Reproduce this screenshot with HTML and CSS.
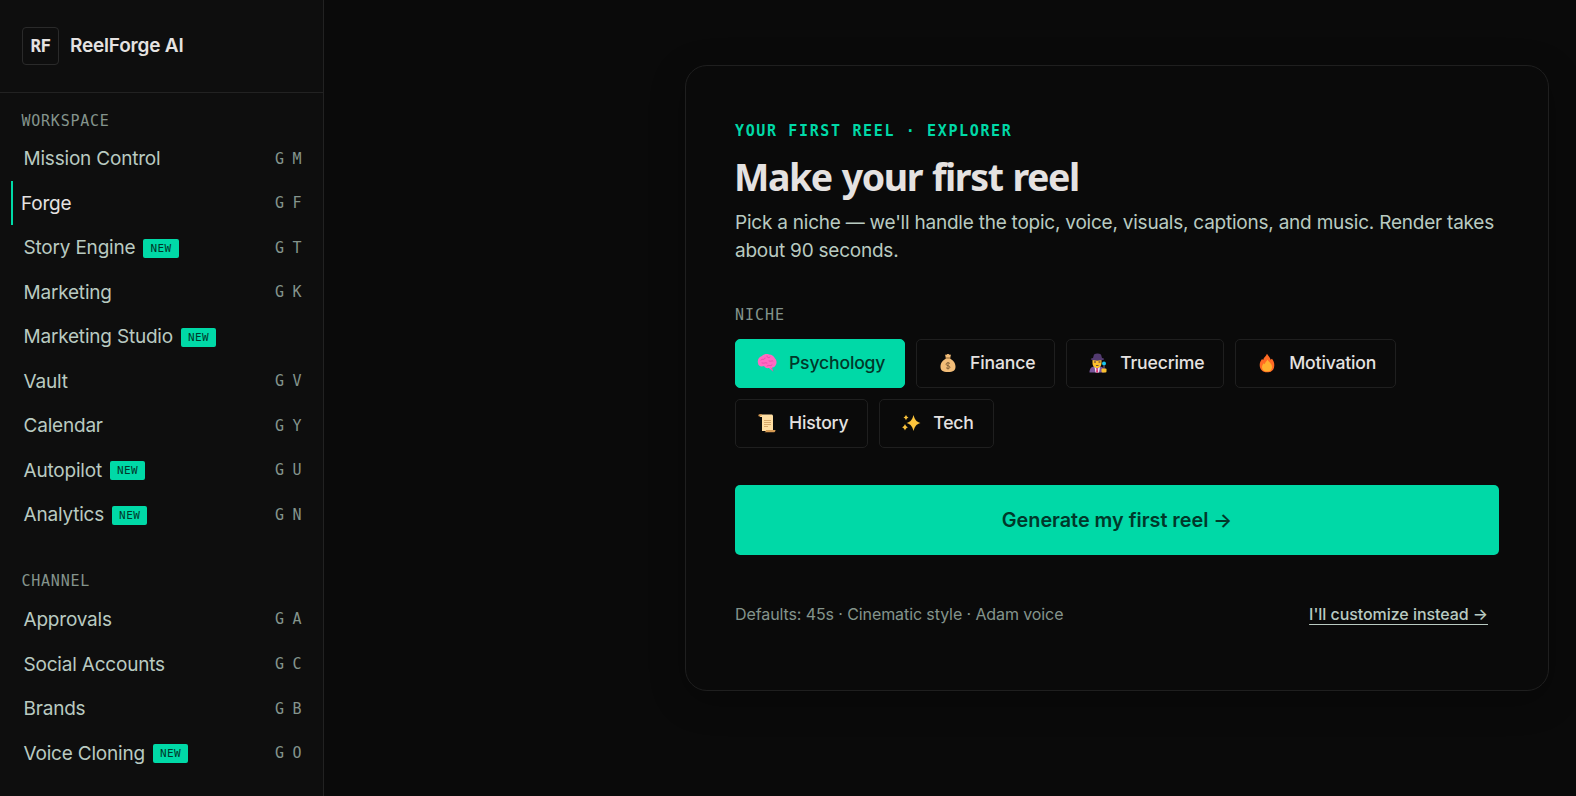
FILE: index.html
```html
<!DOCTYPE html>
<html lang="en">
<head>
    <meta charset="UTF-8">
    <meta name="viewport" content="width=device-width, initial-scale=1.0">
    <title>ReelForge AI</title>
    <link rel="stylesheet" href="styles.css">
</head>
<body>
    <div class="app">
        <aside class="sidebar">
            <div class="brand">
                <div class="brand-mark">RF</div>
                <div class="brand-name">ReelForge AI</div>
            </div>

            <nav class="nav">
                <div class="nav-title">WORKSPACE</div>
                <a class="nav-item"><span>Mission Control</span><kbd>G M</kbd></a>
                <a class="nav-item active"><span>Forge</span><kbd>G F</kbd></a>
                <a class="nav-item"><span>Story Engine</span><b class="badge">NEW</b><kbd>G T</kbd></a>
                <a class="nav-item"><span>Marketing</span><kbd>G K</kbd></a>
                <a class="nav-item"><span>Marketing Studio</span><b class="badge">NEW</b></a>
                <a class="nav-item"><span>Vault</span><kbd>G V</kbd></a>
                <a class="nav-item"><span>Calendar</span><kbd>G Y</kbd></a>
                <a class="nav-item"><span>Autopilot</span><b class="badge">NEW</b><kbd>G U</kbd></a>
                <a class="nav-item"><span>Analytics</span><b class="badge">NEW</b><kbd>G N</kbd></a>
            </nav>

            <nav class="nav">
                <div class="nav-title">CHANNEL</div>
                <a class="nav-item"><span>Approvals</span><kbd>G A</kbd></a>
                <a class="nav-item"><span>Social Accounts</span><kbd>G C</kbd></a>
                <a class="nav-item"><span>Brands</span><kbd>G B</kbd></a>
                <a class="nav-item"><span>Voice Cloning</span><b class="badge">NEW</b><kbd>G O</kbd></a>
            </nav>
        </aside>

        <main class="main">
            <section class="card">
                <div class="eyebrow">YOUR FIRST REEL · EXPLORER</div>
                <h1>Make your first reel</h1>
                <p class="intro">Pick a niche — we'll handle the topic, voice, visuals, captions, and music. Render takes about 90 seconds.</p>

                <div class="label">NICHE</div>
                <div class="chips">
                    <button class="chip selected">
                        <svg class="icon" viewBox="0 0 20 20">
                            <path fill="#ff6ac2" d="M1 10C0 7 2 4 5 3c2-2 5-2.500 7-1.500 3 0 5 2 6 4 2 2 2 5 .5 7-1 1.500-2 2-3.500 2l1 4-4-3.500c-3 .5-4-.5-5-2-3 1-6 0-6-3z"/>
                            <path fill="none" stroke="#e13da4" stroke-width=".7" stroke-linecap="round" d="M4 7c2-2 3 1 4-2M10 3c0 2 2 2 3 1M12 8c2 1 3-1 4 0M5 10c2 1 3-1 5 0M10 13c2-2 3 1 5-1M14 15l2 3"/>
                        </svg>
                        <span>Psychology</span>
                    </button>
                    <button class="chip">
                        <svg class="icon" viewBox="0 0 20 20">
                            <path fill="#f3bd78" d="M7 1.500c1 .8 2-.5 3-.5s2 1.300 3 .5l-1 4c3 1.500 5.500 4.500 5.500 8 0 4-2 5.500-7.500 5.500S2.500 17.500 2.500 13.500c0-3.500 2.500-6.500 5.500-8z"/>
                            <path stroke="#8f6534" stroke-width="1" d="M7.500 5h5"/>
                            <path fill="none" stroke="#73532e" stroke-width=".8" d="M12 10.500c-1-1-4-1-4 .7 0 2 4 1 4 3 0 1.600-3 1.600-4 .5M10 9v7.500"/>
                        </svg>
                        <span>Finance</span>
                    </button>
                    <button class="chip">
                        <svg class="icon" viewBox="0 0 20 20">
                            <path fill="#78559b" d="M1.500 19.500c0-4 2-6 5-6h5c3 0 5 2 5 6z"/>
                            <path fill="#fbc02d" d="M4.500 6h9v4c0 3-2 5-4.500 5s-4.500-2-4.500-5z"/>
                            <path fill="#533b70" d="M5 5l1-3.500c2-1.500 5-1.500 7 0L14 5c2 .3 2.500 1 2 1.500-3 1.500-10.500 1.500-13 0C2.500 6 3 5.300 5 5z"/>
                            <path fill="#eee7f7" d="M6.500 14L9 16l3-2-1 5.500H7.500z"/>
                            <path fill="#df3772" d="M8.500 15h1.200l.5 4.500H8z"/>
                            <path fill="#44304f" d="M6 8.500h2v1H6zM10.500 8.500h2v1h-2zM8 12h2.500v.8H8z"/>
                            <circle cx="16" cy="10.500" r="2" fill="#18c8ef"/>
                            <path stroke="#8c6f9a" d="M16 12.500v4"/>
                            <rect x="13.500" y="15.500" width="5" height="4" rx="1" fill="#fbc02d"/>
                        </svg>
                        <span>Truecrime</span>
                    </button>
                    <button class="chip">
                        <svg class="icon" viewBox="0 0 20 20">
                            <path fill="#ff6a24" d="M10 .8c1 2 3.500 4 3.500 6l1.500-1c1.500 2 2.300 3.500 2.300 6.500 0 5-3 7-7.300 7S2.700 16.500 2.700 12c0-3 1.300-4.500 2.300-6l1.200 1C6.500 4.500 9 3.500 10 .8z"/>
                            <path fill="#ffb02e" d="M10.500 6.500c.5 2 4.500 3.500 4.500 7.500 0 3-2 4.500-5 4.500S5 17 5 14.200c0-2 1-3 1.800-4l1 1c.3-2 2-3 2.700-4.700z"/>
                        </svg>
                        <span>Motivation</span>
                    </button>
                    <button class="chip">
                        <svg class="icon" viewBox="0 0 20 20">
                            <path fill="#ffdea2" d="M3 1.500h11.500c.8 0 1.500.7 1.500 1.500v15H5V4H3z"/>
                            <path fill="#d79b53" d="M2.800 1.200H5v1.300H3.500V3.500H2C.8 2.500 1.500 1.200 2.800 1.200zM9 17h9.500c0 1.700-.8 2.300-2 2.300H6.500c1.500 0 2.500-.8 2.500-2.300z"/>
                            <path stroke="#cc9b5d" stroke-width=".8" d="M7 7.500h7M7 9.500h7M7 11.500h7M7 13.500h4"/>
                        </svg>
                        <span>History</span>
                    </button>
                    <button class="chip">
                        <svg class="icon" viewBox="0 0 20 20">
                            <path fill="#fcc43c" d="M12.500 2c1.500 5 2.500 6.500 7 8-4.500 1.500-5.500 3-7 8-1.500-5-2.500-6.500-7-8 4.500-1.500 5.500-3 7-8zM5 1.800c.6 1.800 1 2.200 2.500 2.800C6 5.200 5.600 5.600 5 7.400c-.6-1.800-1-2.200-2.500-2.800C4 4 4.400 3.600 5 1.800zM4 11c.8 2 1.200 2.400 3 3.200-1.800.8-2.200 1.200-3 3.200-.8-2-1.200-2.400-3-3.200 1.800-.8 2.200-1.200 3-3.200z"/>
                        </svg>
                        <span>Tech</span>
                    </button>
                </div>

                <button class="generate">Generate my first reel →</button>

                <div class="card-footer">
                    <span>Defaults: 45s · Cinematic style · Adam voice</span>
                    <a class="customize">I'll customize instead →</a>
                </div>
            </section>
        </main>
    </div>
</body>
</html>
```
FILE: styles.css
```css
* {
    box-sizing: border-box;
}
body {
    margin: 0;
    background: #0a0a0a;
    color: #e5e2e1;
    font-family: Inter, sans-serif;
}
.app {
    display: flex;
    height: 796px;
    overflow: hidden;
}
.sidebar {
    width: 324px;
    flex-shrink: 0;
    background: #0e0e0e;
    border-right: 1px solid #222;
}
.brand {
    display: flex;
    align-items: center;
    gap: 11px;
    height: 93px;
    padding: 0 22px;
    border-bottom: 1px solid #222;
}
.brand-mark {
    width: 37px;
    height: 38px;
    border: 1px solid #2a2a2a;
    border-radius: 4px;
    display: flex;
    align-items: center;
    justify-content: center;
    font-family: "DejaVu Sans Mono", monospace;
    font-size: 17.600px;
    font-weight: bold;
    letter-spacing: -0.5px;
}
.brand-name {
    padding-bottom: 2px;
    font-size: 19px;
    font-weight: 600;
    letter-spacing: -0.2px;
}
.nav {
    padding: 18px 11px 0;
}
.nav + .nav {
    padding-top: 34px;
}
.nav-title {
    height: 25.300px;
    padding-left: 10.500px;
    font-family: "DejaVu Sans Mono", monospace;
    font-size: 15px;
    line-height: 20px;
    letter-spacing: 0.760px;
    color: #84948c;
}
.nav + .nav .nav-title {
    height: 26px;
}
.nav-item {
    display: flex;
    align-items: center;
    height: 44.550px;
    padding: 0 10.700px 0 12.500px;
    font-size: 19px;
    letter-spacing: -0.2px;
    color: #b9cac1;
    white-space: nowrap;
}
.nav-item.active {
    padding-left: 8px;
    border-left: 2px solid #00d9a7;
    color: #e5e2e1;
}
.nav-item kbd {
    margin-left: auto;
    font-family: "DejaVu Sans Mono", monospace;
    font-size: 15px;
    letter-spacing: -0.3px;
    color: #84948c;
}
.badge {
    height: 19px;
    margin-top: 1px;
    margin-left: 8px;
    padding: 0 7px;
    border-radius: 2px;
    background: #00d9a7;
    color: #00382a;
    font-family: "DejaVu Sans Mono", monospace;
    font-size: 11px;
    font-weight: normal;
    line-height: 19px;
    letter-spacing: 0.450px;
}
.main {
    flex: 1;
    display: flex;
    justify-content: flex-end;
    align-items: flex-start;
    padding: 65px 27px 0 0;
}
.card {
    width: 864px;
    height: 626px;
    padding: 54px 49px 0;
    background: #0a0a0a;
    border: 1px solid #1f1f1f;
    border-radius: 22px;
    box-shadow: 0 9px 35px rgba(0, 0, 0, 0.3);
}
.eyebrow {
    height: 22px;
    font-family: "DejaVu Sans Mono", monospace;
    font-size: 15px;
    font-weight: bold;
    line-height: 22px;
    letter-spacing: 1.640px;
    color: #00d9a7;
}
h1 {
    margin: 13px 0 0 -1px;
    font-family: "Noto Sans", sans-serif;
    font-size: 37.500px;
    font-weight: 700;
    line-height: 44px;
    letter-spacing: -1.400px;
    word-spacing: 1.500px;
}
.intro {
    margin: 10px 0 0;
    font-size: 19px;
    line-height: 28px;
    letter-spacing: -0.230px;
    color: #b9cac1;
}
.label {
    margin-top: 39px;
    font-family: "DejaVu Sans Mono", monospace;
    font-size: 15px;
    line-height: 22px;
    letter-spacing: 0.980px;
    color: #84948c;
}
.chips {
    display: flex;
    flex-wrap: wrap;
    gap: 11px;
    margin-top: 13px;
}
.chip {
    display: flex;
    align-items: center;
    gap: 12px;
    height: 49px;
    padding: 0 18.800px 1px 21px;
    background: none;
    border: 1px solid #1f1f1f;
    border-radius: 5px;
    color: #e5e2e1;
    font-family: inherit;
    font-size: 17.600px;
    font-weight: 500;
    letter-spacing: -0.170px;
}
.chip span {
    padding-bottom: 1px;
}
.chip.selected {
    background: #00d9a7;
    border-color: #00d9a7;
    color: #00382a;
}
.icon {
    width: 20px;
    height: 20px;
}
.generate {
    display: block;
    width: 100%;
    height: 70px;
    margin-top: 37px;
    border: 0;
    border-radius: 5px;
    background: #00d9a7;
    color: #00382a;
    font-family: inherit;
    font-size: 19.800px;
    font-weight: 600;
}
.card-footer {
    display: flex;
    justify-content: space-between;
    align-items: center;
    margin-top: 48px;
    padding-right: 11px;
    font-size: 16px;
    line-height: 22px;
    letter-spacing: -0.100px;
    color: #84948c;
}
.customize {
    color: #b9cac1;
    font-weight: 500;
    letter-spacing: -0.060px;
    text-decoration: underline;
    text-underline-offset: 4px;
}
```
